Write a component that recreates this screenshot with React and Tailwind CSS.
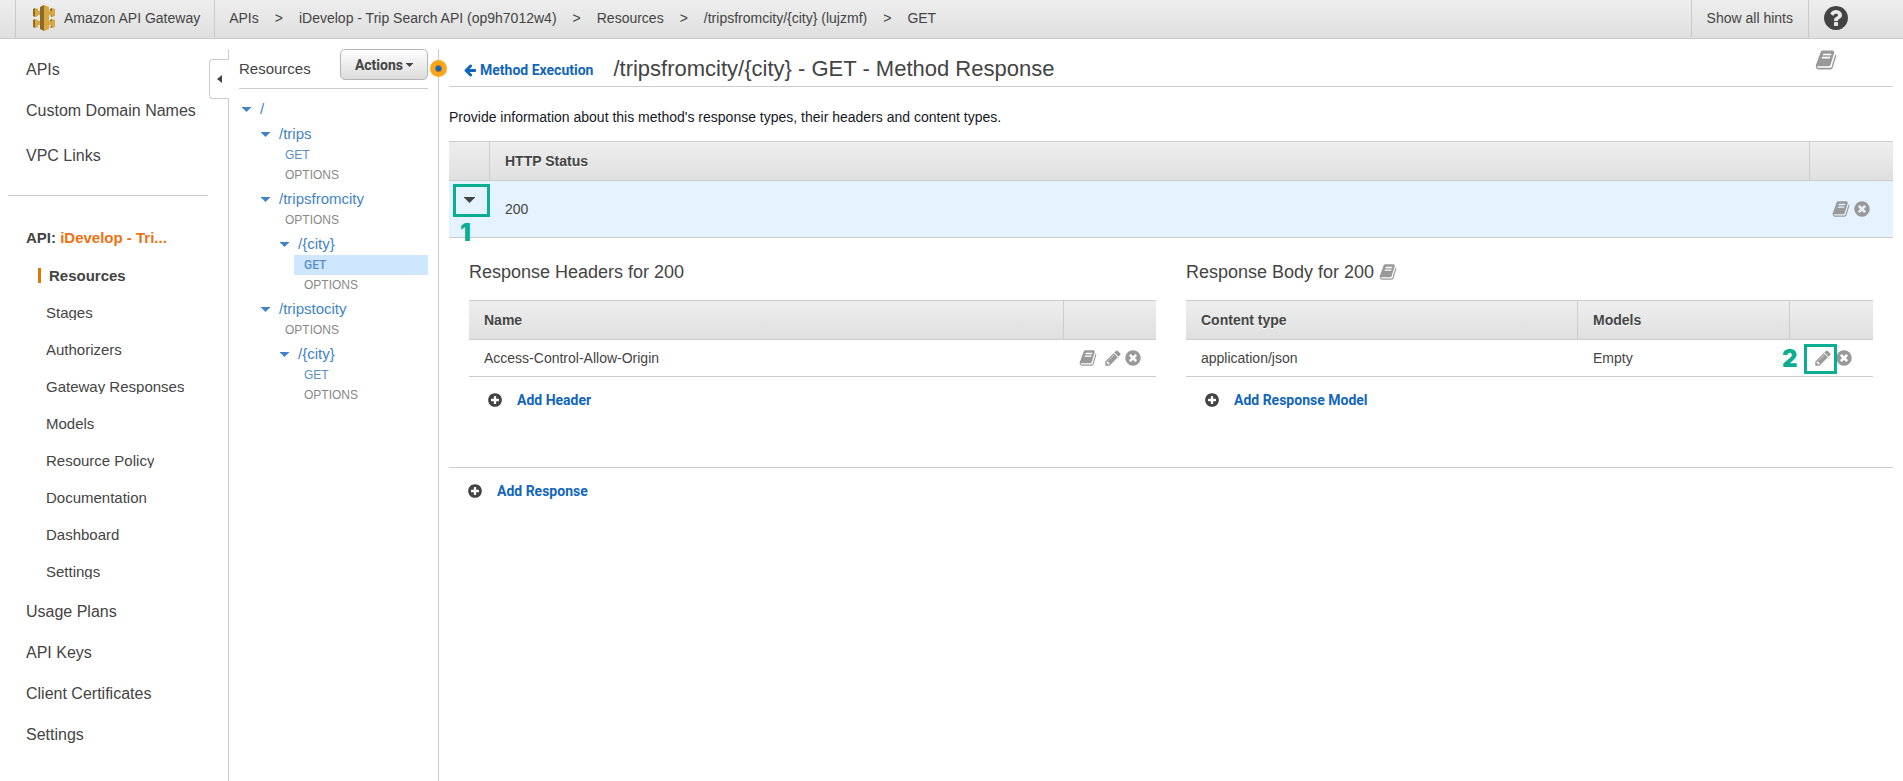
import React from "react";

const CIRCLE = "m320-64q0 209-103 385.5t-279.5 279.5-385.5 103-385.5-103-279.5-279.5-103-385.5 103-385.5 279.5-279.5 385.5-103 385.5 103 279.5 279.5 103 385.5z";

const PATHS = {
  book: "M1703 478q40 57 18 129l-275 906q-19 64-76.5 107.5t-122.5 43.5h-923q-77 0-148.5-53.5t-99.5-131.5q-24-67-2-127 0-4 3-27t4-37q1-8-3-21.5t-3-19.5q2-11 8-21t16.5-23.5 16.5-23.5q23-38 45-91.5t30-91.5q3-10 .5-30t-.5-28q3-11 17-28t17-23q21-36 42-92t25-90q1-9-2.5-32t.5-28q4-13 22-30.5t22-22.5q19-26 42.5-84.5t27.5-96.5q1-8-3-25.5t-2-26.5q2-8 9-18t18-23 17-21q8-12 16.5-30.5t15-35 16-36 19.5-32 26.5-23.5 36-11.5 47.5 5.5l-1 3q38-9 51-9h761q74 0 114 56t18 130l-274 906q-36 119-71.5 153.5t-128.5 34.5h-869q-27 0-38 15-11 16-1 43 24 70 144 70h923q29 0 56-15.5t35-41.5l300-987q7-22 5-57 38 15 59 43zm-1064 2q-4 13 2 22.5t20 9.5h608q13 0 25.5-9.5t16.5-22.5l21-64q4-13-2-22.5t-20-9.5h-608q-13 0-25.5 9.5t-16.5 22.5zm-83 256q-4 13 2 22.5t20 9.5h608q13 0 25.5-9.5t16.5-22.5l21-64q4-13-2-22.5t-20-9.5h-608q-13 0-25.5 9.5t-16.5 22.5z",
  pencil: "M491 1536l91-91-235-235-91 91v107h128v128h107zm523-928q0-22-22-22-10 0-17 7l-542 542q-7 7-7 17 0 22 22 22 10 0 17-7l542-542q7-7 7-17zm-54-192l416 416-832 832h-416v-416zm683 96q0 53-37 90l-166 166-416-416 166-165q36-38 90-38 53 0 91 38l235 234q37 39 37 91z",
  remove: "M1277 1122q0-26-19-45l-181-181 181-181q19-19 19-45 0-27-19-46l-90-90q-19-19-46-19-26 0-45 19l-181 181-181-181q-19-19-45-19-27 0-46 19l-90 90q-19 19-19 46 0 26 19 45l181 181-181 181q-19 19-19 45 0 27 19 46l90 90q19 19 46 19 26 0 45-19l181-181 181 181q19 19 45 19 27 0 46-19l90-90q19-19 19-46zm387-226q0 209-103 385.5t-279.5 279.5-385.5 103-385.5-103-279.5-279.5-103-385.5 103-385.5 279.5-279.5 385.5-103 385.5 103 279.5 279.5 103 385.5z",
  plus: "M1344 960v-128q0-26-19-45t-45-19h-256v-256q0-26-19-45t-45-19h-128q-26 0-45 19t-19 45v256h-256q-26 0-45 19t-19 45v128q0 26 19 45t45 19h256v256q0 26 19 45t45 19h128q26 0 45-19t19-45v-256h256q26 0 45-19t19-45z" + CIRCLE,
  help: "M1024 1376v-192q0-14-9-23t-23-9h-192q-14 0-23 9t-9 23v192q0 14 9 23t23 9h192q14 0 23-9t9-23zm256-672q0-88-55.5-163t-138.5-116-170-41q-243 0-371 213-15 24 8 42l132 100q7 6 19 6 16 0 25-12 53-68 86-92 34-24 86-24 48 0 85.5 26t37.5 59q0 38-20 61t-68 45q-63 28-115.5 86.5t-52.5 125.5v36q0 14 9 23t23 9h192q14 0 23-9t9-23q0-19 21.5-49.5t54.5-49.5q32-18 49-28.5t46-35 44.5-48 28-60.5 12.5-81zm384 192q0 209-103 385.5t-279.5 279.5-385.5 103-385.5-103-279.5-279.5-103-385.5 103-385.5 279.5-279.5 385.5-103 385.5 103 279.5 279.5 103 385.5z",
  back: "M1664 896v128q0 53-32.5 90.5t-84.5 37.5h-704l293 294q38 36 38 90t-38 90l-75 76q-37 37-90 37-52 0-91-37l-651-652q-37-37-37-90 0-52 37-91l651-650q38-38 91-38 52 0 90 38l75 74q38 38 38 91t-38 91l-293 293h704q52 0 84.5 37.5t32.5 90.5z",
};

function Icon({ name, className }) {
  return (
    <svg viewBox="0 0 1792 1792" fill="currentColor" aria-hidden="true" className={`shrink-0 ${className}`}>
      <path d={PATHS[name]} />
    </svg>
  );
}

function Caret({ className }) {
  return (
    <svg viewBox="0 0 10 6" preserveAspectRatio="none" fill="currentColor" aria-hidden="true" className={`shrink-0 ${className}`}>
      <path d="M0 0h10v0.6L5 6 0 0.6z" />
    </svg>
  );
}

function GatewayLogo() {
  return (
    <svg viewBox="0 0 24 26" className="h-[26px] w-6 shrink-0" aria-hidden="true">
      <path fill="#8c6a26" d="M1 4l2-1v9l-2-1zM1 15l2-1v9l-2-1z" />
      <path fill="#d9a741" d="M3 3l3 1v2h2v4H6v1l-3 1zM3 14l3 1v1h2v4H6v2l-3 1z" />
      <path fill="#8c6a26" d="M18 4l2-1v3h-2zM18 11l2-1v2zM18 15l2-1v2h-2zM18 22l2-2v3z" />
      <path fill="#d9a741" d="M20 3l3 1v7l-3 1v-2h-4V6h4zM20 14l3 1v7l-3 1v-3h-4v-4h4z" />
      <path fill="#8c6a26" d="M8 2l4-2v26l-4-2z" />
      <path fill="#d9a741" d="M12 0l5 2v22l-5 2z" />
    </svg>
  );
}

function IconButton({ label, name, size = "size-[18px]" }) {
  return (
    <button type="button" aria-label={label} className="flex text-[#999]">
      <Icon name={name} className={size} />
    </button>
  );
}

const CRUMBS = ["APIs", "iDevelop - Trip Search API (op9h7012w4)", "Resources", "/tripsfromcity/{city} (lujzmf)", "GET"];

function TopBar() {
  return (
    <header className="flex h-[39px] shrink-0 items-stretch border-b border-[#ccc] bg-linear-to-b from-[#eee] to-[#dfdfdf] pl-[15px] text-sm">
      <a href="#home" className="flex items-center gap-2 border-x border-[#c9c9c9] pr-3.5 pb-0.5 pl-4">
        <GatewayLogo />
        <span>Amazon API Gateway</span>
      </a>
      <nav aria-label="Breadcrumb" className="flex grow items-center gap-4 pb-0.5 pl-3.5">
        {CRUMBS.map((crumb, i) => (
          <React.Fragment key={crumb}>
            {i > 0 && <span>&gt;</span>}
            <a href="#crumb">{crumb}</a>
          </React.Fragment>
        ))}
      </nav>
      <button type="button" className="border-x border-[#c9c9c9] px-[15px] pb-0.5">Show all hints</button>
      <button type="button" aria-label="Help" className="mr-[53px] flex items-center pb-0.5 pl-[13px]">
        <Icon name="help" className="size-7" />
      </button>
    </header>
  );
}

const SUB_ITEMS = ["Stages", "Authorizers", "Gateway Responses", "Models", "Resource Policy", "Documentation", "Dashboard", "Settings"];

function NavLink({ children }) {
  return <a href="#nav" className="flex h-[41px] items-center pl-[26px] text-base">{children}</a>;
}

function SideNav() {
  return (
    <nav aria-label="Services" className="relative mt-2.5 w-[229px] shrink-0 border-r border-[#ccc]">
      <NavLink>APIs</NavLink>
      <NavLink>Custom Domain Names</NavLink>
      <div className="h-1" />
      <NavLink>VPC Links</NavLink>
      <hr className="mt-[19px] mr-5 ml-2 border-[#ccc]" />
      <a href="#api" className="mt-8 block pl-[26px] text-[15px] leading-5 font-bold">
        API: <span className="text-[#ec7211]">iDevelop - Tri...</span>
      </a>
      <a href="#resources" className="mt-5 ml-[38px] block border-l-3 border-[#e07700] pl-2 text-[15px] leading-[15px] font-bold">Resources</a>
      <ul className="mt-[11px] mb-px">
        {SUB_ITEMS.map((item) => (
          <li key={item} className="flex h-[37px] items-center pl-[46px]">
            <a href="#item" className="h-[15px] overflow-hidden text-[15px] leading-[15px]">{item}</a>
          </li>
        ))}
      </ul>
      <NavLink>Usage Plans</NavLink>
      <NavLink>API Keys</NavLink>
      <NavLink>Client Certificates</NavLink>
      <NavLink>Settings</NavLink>
      <button type="button" aria-label="Collapse navigation" className="absolute top-2.5 -right-px flex h-10 w-5 items-center rounded-l-[4px] border border-r-0 border-[#ccc] bg-white pl-[7px]">
        <svg viewBox="0 0 5 8" className="h-2 w-[5px]" fill="currentColor" aria-hidden="true"><path d="M5 0v8L0 4z" /></svg>
      </button>
    </nav>
  );
}

const TREE = [
  { depth: 0, path: "/", methods: [] },
  { depth: 1, path: "/trips", methods: ["GET", "OPTIONS"] },
  { depth: 1, path: "/tripsfromcity", methods: ["OPTIONS"] },
  { depth: 2, path: "/{city}", methods: ["GET", "OPTIONS"], selected: "GET" },
  { depth: 1, path: "/tripstocity", methods: ["OPTIONS"] },
  { depth: 2, path: "/{city}", methods: ["GET", "OPTIONS"] },
];
const INDENT = ["ml-[3px]", "ml-[22px]", "ml-[41px]"];
const METHOD_INDENT = ["ml-[17px]", "ml-9", "ml-[55px]"];

function Method({ name, depth, selected }) {
  const tone = selected ? "bg-[#cfe6ff] font-medium font-[Roboto] text-[#5a8fc4]" : name === "GET" ? "text-[#5a8fc4]" : "text-[#888]";
  return (
    <a href="#method" className={`flex h-5 items-center pl-2.5 text-[12px] ${METHOD_INDENT[depth]} ${tone}`}>{name}</a>
  );
}

function ResourcePanel() {
  return (
    <aside className="relative mt-2.5 w-[210px] shrink-0 border-r border-[#ccc] px-2.5">
      <div className="flex h-10 justify-between border-b border-[#ccc]">
        <h2 className="pt-2 text-[15px] leading-6">Resources</h2>
        <button type="button" className="flex h-[31px] items-center gap-[3px] rounded-[5px] border border-[#b5b5b5] bg-linear-to-b from-white to-[#dcdcdc] px-3.5 font-[Roboto] text-sm font-bold">
          Actions
          <Caret className="h-1 w-[7px]" />
        </button>
      </div>
      <div className="pt-1.5">
        {TREE.map((node, i) => (
          <div key={i}>
            <a href="#resource" className={`flex h-[25px] items-center gap-[9px] pt-[3px] text-[15px] text-[#3f83c8] ${INDENT[node.depth]}`}>
              <Caret className="h-[5px] w-[9px]" />
              {node.path}
            </a>
            {node.methods.map((m) => (
              <Method key={m} name={m} depth={node.depth} selected={node.selected === m} />
            ))}
          </div>
        ))}
      </div>
      <span className="absolute top-[11px] -right-[9px] flex size-[17px] items-center justify-center rounded-full bg-[#fba41c]">
        <span className="size-[5px] rounded-full bg-[#1166bb] ring-1 ring-[#8a7a4a]" />
      </span>
    </aside>
  );
}

function HeadCell({ children, label, className = "" }) {
  return (
    <th scope="col" aria-label={label} className={`h-10 border-y border-l border-[#ccc] px-[15px] text-left text-sm font-bold [text-shadow:0_1px_0_#fff] first:border-l-0 ${className}`}>
      {children}
    </th>
  );
}

function AddLink({ children, className }) {
  return (
    <button type="button" className={`flex items-center gap-3.5 text-sm ${className}`}>
      <Icon name="plus" className="size-4" />
      <span className="font-[Roboto] font-bold text-[#1166bb]">{children}</span>
    </button>
  );
}

const HEAD_ROW = "bg-linear-to-b from-[#eee] to-[#dfdfdf]";

function HeadersTable() {
  return (
    <section className="flex-1">
      <h2 className="text-lg leading-[22px]">Response Headers for 200</h2>
      <table className="mt-[17px] w-full table-fixed border-separate border-spacing-0 text-sm">
        <thead className={HEAD_ROW}>
          <tr>
            <HeadCell>Name</HeadCell>
            <HeadCell label="Actions" className="w-[93px]" />
          </tr>
        </thead>
        <tbody>
          <tr>
            <td className="h-[37px] border-b border-[#ccc] px-[15px]">Access-Control-Allow-Origin</td>
            <td className="border-b border-[#ccc]">
              <div className="flex items-center justify-end pr-3.5">
                <span className="mr-[7px]"><IconButton label="Documentation" name="book" /></span>
                <span className="mr-0.5"><IconButton label="Edit header" name="pencil" /></span>
                <IconButton label="Delete header" name="remove" />
              </div>
            </td>
          </tr>
        </tbody>
      </table>
      <AddLink className="mt-[13px] ml-[18px]">Add Header</AddLink>
    </section>
  );
}

function BodyTable() {
  return (
    <section className="flex-1">
      <h2 className="flex items-center gap-[5px] text-lg leading-[22px]">
        Response Body for 200
        <IconButton label="Body documentation" name="book" />
      </h2>
      <table className="mt-[17px] w-full table-fixed border-separate border-spacing-0 text-sm">
        <thead className={HEAD_ROW}>
          <tr>
            <HeadCell>Content type</HeadCell>
            <HeadCell className="w-[212px]">Models</HeadCell>
            <HeadCell label="Actions" className="w-[84px]" />
          </tr>
        </thead>
        <tbody>
          <tr>
            <td className="h-[37px] border-b border-[#ccc] px-[15px]">application/json</td>
            <td className="border-b border-[#ccc] px-4">Empty</td>
            <td className="border-b border-[#ccc]">
              <div className="flex items-center justify-end gap-[3px] pr-5">
                <span className="relative">
                  <IconButton label="Edit model" name="pencil" />
                  <span className="pointer-events-none absolute -top-[5px] -left-2.5 h-[30px] w-[33px] border-3 border-[#0bae92]" />
                  <span className="absolute -top-0.5 -left-8 font-[Inter] text-2xl leading-6 font-black text-[#0bae92]">2</span>
                </span>
                <IconButton label="Delete model" name="remove" />
              </div>
            </td>
          </tr>
        </tbody>
      </table>
      <AddLink className="mt-[13px] ml-[18px]">Add Response Model</AddLink>
    </section>
  );
}

function MethodResponse() {
  return (
    <main className="mt-2.5 mr-2.5 ml-2.5 min-w-0 grow">
      <div className="flex h-[38px] items-center border-b border-[#ccc]">
        <a href="#execution" className="ml-3.5 flex items-center gap-[3px] pt-1 font-[Roboto] text-sm font-bold text-[#1166bb]">
          <Icon name="back" className="size-3.5" />
          Method Execution
        </a>
        <h1 className="ml-5 grow pt-0.5 text-[22px]">/tripsfromcity/&#123;city&#125; - GET - Method Response</h1>
        <span className="mr-14 pb-4"><IconButton label="Method documentation" name="book" size="size-[22px]" /></span>
      </div>
      <p className="mt-5 text-sm text-[#16191f]">Provide information about this method's response types, their headers and content types.</p>
      <table className="mt-3.5 w-full table-fixed border-separate border-spacing-0 text-sm">
        <thead className={HEAD_ROW}>
          <tr>
            <HeadCell label="Expand" className="w-10" />
            <HeadCell>HTTP Status</HeadCell>
            <HeadCell label="Actions" className="w-[84px]" />
          </tr>
        </thead>
        <tbody>
          <tr className="bg-[#e5f2ff]">
            <td className="h-[57px] border-b border-[#ccc] align-top">
              <div className="relative mt-[3px] ml-1">
                <button type="button" aria-label="Collapse response 200" className="flex h-[33px] w-[37px] items-center border-3 border-[#0bae92] pb-0.5 pl-2">
                  <Caret className="h-1.5 w-[11px]" />
                </button>
                <span className="absolute top-[37px] left-[7px] font-[Inter] text-2xl leading-6 font-black text-[#0bae92]">1</span>
              </div>
            </td>
            <td className="border-b border-[#ccc] px-4">200</td>
            <td className="border-b border-[#ccc]">
              <div className="flex items-center justify-end gap-[3px] pr-[22px]">
                <IconButton label="Response documentation" name="book" />
                <IconButton label="Delete response" name="remove" />
              </div>
            </td>
          </tr>
        </tbody>
      </table>
      <div className="flex gap-[30px] border-b border-[#ccc] px-5 pt-[23px] pb-[57px]">
        <HeadersTable />
        <BodyTable />
      </div>
      <AddLink className="mt-[13px] ml-[18px]">Add Response</AddLink>
    </main>
  );
}

export default function App() {
  return (
    <div className="flex min-h-screen flex-col bg-white font-['Liberation_Sans',Arial,sans-serif] text-[#444]">
      <TopBar />
      <div className="flex grow items-stretch">
        <SideNav />
        <ResourcePanel />
        <MethodResponse />
      </div>
    </div>
  );
}
